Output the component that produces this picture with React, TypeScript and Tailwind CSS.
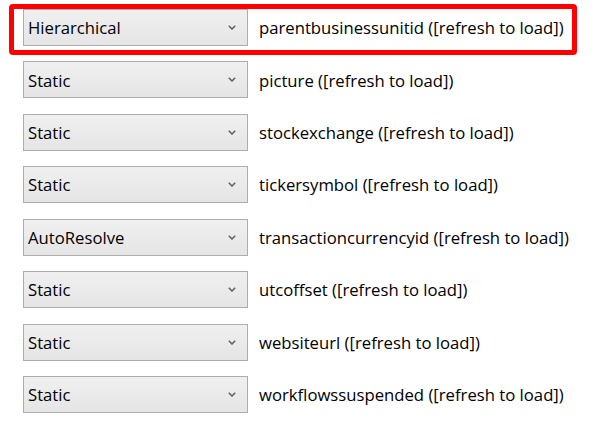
import React from "react";

const rows: [string, string][] = [
  ["Hierarchical", "parentbusinessunitid ([refresh to load])"],
  ["Static", "picture ([refresh to load])"],
  ["Static", "stockexchange ([refresh to load])"],
  ["Static", "tickersymbol ([refresh to load])"],
  ["AutoResolve", "transactioncurrencyid ([refresh to load])"],
  ["Static", "utcoffset ([refresh to load])"],
  ["Static", "websiteurl ([refresh to load])"],
  ["Static", "workflowssuspended ([refresh to load])"],
];

function Chevron() {
  return (
    <svg width="8" height="5" viewBox="0 0 8 5" className="shrink-0">
      <path d="M0.8 0.8 L4 4 L7.2 0.8" fill="none" stroke="#5f5f5f" strokeWidth="1.5" />
    </svg>
  );
}

export default function App() {
  return (
    <div
      className="relative w-[594px] h-[426px] bg-white overflow-hidden"
      style={{ fontFamily: '"Open Sans", "Noto Sans", sans-serif' }}
    >
      <div className="flex flex-col gap-[15.43px] pt-[9px] pl-[23px]">
        {rows.map(([mode, label], i) => (
          <div key={i} className="flex items-center h-[37px]">
            <div className="flex items-center justify-between w-[225px] h-[37px] border border-[#adadad] bg-gradient-to-b from-[#f0f0f0] to-[#e5e5e5] pl-[4px] pr-[11px]">
              <span className="text-[16.7px] text-black leading-none pt-[2px]">{mode}</span>
              <Chevron />
            </div>
            <span className="ml-[11px] text-[16.7px] text-black leading-none pt-[2px]">{label}</span>
          </div>
        ))}
      </div>
      <div className="absolute left-[9px] top-[4px] w-[568px] h-[51px] border-[5px] border-[#ff0000] rounded-[4px]" />
    </div>
  );
}
